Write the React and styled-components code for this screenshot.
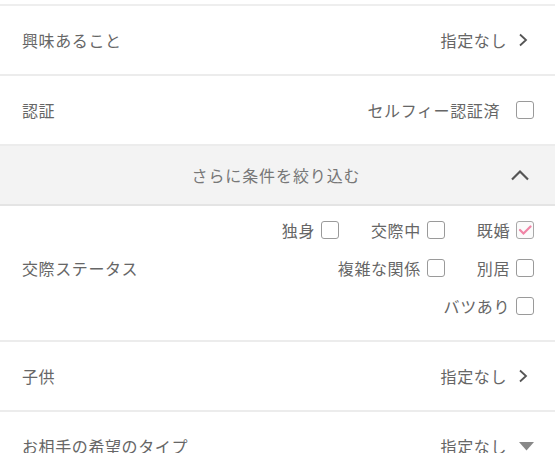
import React from 'react';
import styled, { createGlobalStyle } from "styled-components";

const GlobalStyle = createGlobalStyle`
  html, body {
    margin: 0;
    padding: 0;
    background: #fff;
  }
  body {
    font-family: "Noto Sans CJK JP", "Noto Sans", sans-serif;
    letter-spacing: 0.6px;
    -webkit-font-smoothing: antialiased;
  }
`;

const List = styled.div`
  margin-top: 4px;
  border-top: 2px solid #eeeeee;
  width: 555px;
`;

const Row = styled.div`
  display: flex;
  align-items: center;
  justify-content: space-between;
  height: 68px;
  padding: 0 21px 0 22px;
  border-bottom: 2px solid #ececec;
  color: #666;
  font-size: 16px;
`;

const Label = styled.span`
  color: #666;
  font-size: 16px;
  line-height: 24px;
`;

const Value = styled.span`
  display: flex;
  align-items: center;
  gap: ${(p) => p.$gap || 11}px;
  color: #666;
  font-size: 16px;
  line-height: 24px;
  padding-right: ${(p) => p.$pr || 0}px;
`;

const Section = styled.div`
  display: grid;
  grid-template-columns: 1fr auto 1fr;
  align-items: center;
  height: 58px;
  padding: 0 25px 0 22px;
  background: #f3f3f3;
  border-bottom: 2px solid #e4e4e4;
`;

const SectionTitle = styled.span`
  grid-column: 2;
  color: #777;
  font-size: 16px;
  line-height: 24px;
  letter-spacing: 0.9px;
`;

const SectionIcon = styled.span`
  grid-column: 3;
  justify-self: end;
  display: flex;
`;

const StatusRow = styled.div`
  display: flex;
  align-items: center;
  justify-content: space-between;
  padding: 12px 21px 22px 22px;
  border-bottom: 2px solid #ececec;
`;

const Options = styled.div`
  display: flex;
  flex-direction: column;
  align-items: flex-end;
  gap: 14px;
`;

const OptionLine = styled.div`
  display: flex;
  justify-content: flex-end;
  gap: 32px;
`;

const Option = styled.label`
  display: flex;
  align-items: center;
  gap: 6px;
  color: #666;
  font-size: 16px;
  line-height: 24px;
`;

const Box = styled.span`
  display: flex;
  align-items: center;
  justify-content: center;
  width: 18px;
  height: 18px;
  box-sizing: border-box;
  border: 1.5px solid ${(p) => (p.$checked ? "#a8a8a8" : "#9a9a9a")};
  border-radius: 3px;
  background: ${(p) => (p.$checked ? "#fbfbfb" : "#fff")};
`;

const Chevron = () => (
  <svg width="10" height="14" viewBox="0 0 10 14">
    <path d="M2 1.5 L8 7 L2 12.5" fill="none" stroke="#555" strokeWidth="1.8" />
  </svg>
);

const ChevronUp = () => (
  <svg width="20" height="12" viewBox="0 0 20 12">
    <path d="M2 10.5 L10 2.5 L18 10.5" fill="none" stroke="#555" strokeWidth="2.2" />
  </svg>
);

const Triangle = () => (
  <svg width="15" height="10" viewBox="0 0 15 10">
    <path d="M0 1 L15 1 L7.5 9.5 Z" fill="#888" />
  </svg>
);

function Checkbox({ checked }) {
  return (
    <Box $checked={checked}>
      {checked && (
        <svg width="14" height="12" viewBox="0 0 14 12">
          <path d="M2 6 L5.5 9.5 L12.5 2.5" fill="none" stroke="#f084a6" strokeWidth="2.2" strokeLinecap="round" />
        </svg>
      )}
    </Box>
  );
}

const statusLines = [
  [{ t: "独身" }, { t: "交際中" }, { t: "既婚", checked: true }],
  [{ t: "複雑な関係" }, { t: "別居" }],
  [{ t: "バツあり" }],
];

export default function App() {
  return (
    <>
      <GlobalStyle />
      <List>
        <Row>
          <Label>興味あること</Label>
          <Value $pr={6}>指定なし<Chevron /></Value>
        </Row>
        <Row>
          <Label>認証</Label>
          <Value $gap={16}>セルフィー認証済<Checkbox /></Value>
        </Row>
        <Section>
          <SectionTitle>さらに条件を絞り込む</SectionTitle>
          <SectionIcon><ChevronUp /></SectionIcon>
        </Section>
        <StatusRow>
          <Label>交際ステータス</Label>
          <Options>
            {statusLines.map((line, i) => (
              <OptionLine key={i}>
                {line.map((o) => (
                  <Option key={o.t}>
                    {o.t}
                    <Checkbox checked={o.checked} />
                  </Option>
                ))}
              </OptionLine>
            ))}
          </Options>
        </StatusRow>
        <Row>
          <Label>子供</Label>
          <Value $pr={6}>指定なし<Chevron /></Value>
        </Row>
        <Row>
          <Label>お相手の希望のタイプ</Label>
          <Value $gap={12}>指定なし<Triangle /></Value>
        </Row>
      </List>
    </>
  );
}
